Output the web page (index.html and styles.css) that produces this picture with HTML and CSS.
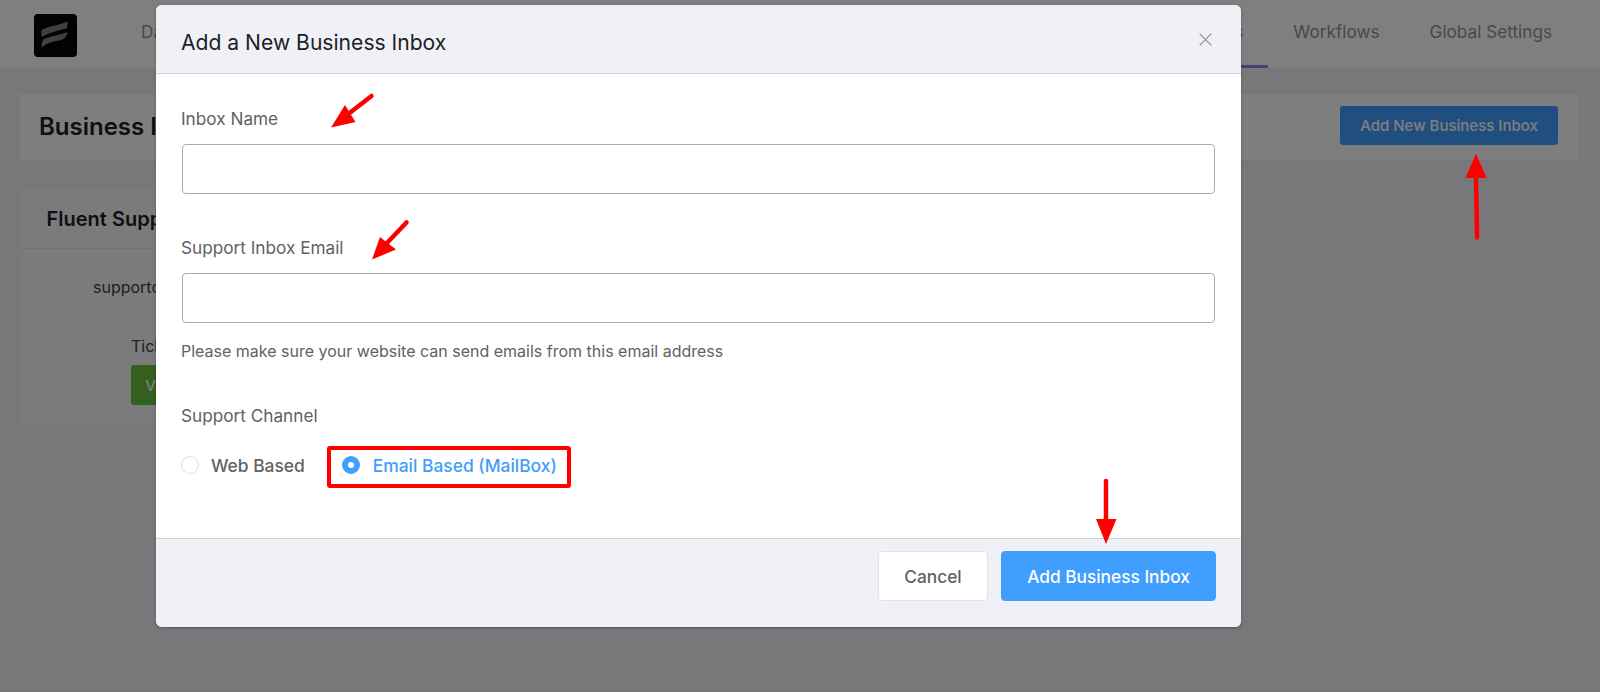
FILE: index.html
```html
<!DOCTYPE html>
<html lang="en">
<head>
<meta charset="utf-8">
<title>Add a New Business Inbox</title>
<link rel="stylesheet" href="styles.css">
</head>
<body>
<div class="app">
  <header class="nav">
    <svg class="logo" viewBox="0 0 44 44" aria-hidden="true">
      <rect width="44" height="44" rx="4" fill="#050505"/>
      <path d="M7.7 18C7.7 16.5 8.5 15.5 10 15C18 12.5 27 10.5 34.5 8C34.5 11 34 13 33 15C25 16.5 15 19.5 7.7 23.5Z" fill="#808080"/>
      <path d="M9.5 26C17 22.5 27 21.5 34.5 18.5C33.5 22.5 31.5 25.5 28 26.5C20 28 12 29.5 7.7 34.5C7.7 31 8 28 9.5 26Z" fill="#808080"/>
    </svg>
    <nav class="links">
      <a class="link">Dashboard</a>
      <a class="link">Tickets</a>
      <a class="link">Reports</a>
      <a class="link">Customers</a>
    </nav>
    <nav class="links links-end">
      <a class="link link-active">Business Inboxes</a>
      <a class="link">Workflows</a>
      <a class="link">Global Settings</a>
    </nav>
  </header>
  <main class="content">
    <section class="page-head">
      <h1 class="page-title">Business Inboxes</h1>
      <button class="btn-primary" type="button">Add New Business Inbox</button>
    </section>
    <section class="card">
      <h2 class="card-title">Fluent Support</h2>
      <div class="card-body">
        <p class="card-mail">supportdesk@example.com</p>
        <p class="card-label">Tickets</p>
        <button class="btn-success" type="button">View Tickets</button>
      </div>
    </section>
  </main>
</div>

<div class="backdrop"></div>

<div class="modal">
  <div class="modal-head">
    <h3 class="modal-title">Add a New Business Inbox</h3>
    <svg class="close" viewBox="0 0 13 13" aria-hidden="true"><path d="M0.7 0.7L12.3 12.3M12.3 0.7L0.7 12.3"/></svg>
  </div>
  <form class="modal-body">
    <div class="field field-name">
      <label class="label">Inbox Name</label>
      <input class="input" type="text">
    </div>
    <div class="field field-email">
      <label class="label">Support Inbox Email</label>
      <input class="input" type="text">
      <p class="help">Please make sure your website can send emails from this email address</p>
    </div>
    <div class="field-channel">
      <p class="label">Support Channel</p>
      <div class="radios">
        <span class="radio"><i class="dot"></i>Web Based</span>
        <span class="radio radio-on"><i class="dot"></i>Email Based (MailBox)</span>
      </div>
    </div>
  </form>
  <div class="modal-foot">
    <button class="btn-cancel" type="button">Cancel</button>
    <button class="btn-submit" type="button">Add Business Inbox</button>
  </div>
</div>

<svg class="annotations" viewBox="0 0 1600 692" aria-hidden="true">
  <rect class="mark-box" x="329" y="448" width="240" height="38" rx="1"/>
  <path class="mark-line" d="M371.5 96L347 115"/>
  <path class="mark-head" d="M331 127.5L345 105L355.5 122Z"/>
  <path class="mark-line" d="M406.5 222.5L386 244"/>
  <path class="mark-head" d="M372 259.5L380 237L396 249.5Z"/>
  <path class="mark-line" d="M1477 237.5L1476 176"/>
  <path class="mark-head" d="M1476 153.5L1465.5 178L1486.5 178Z"/>
  <path class="mark-line" d="M1106 481L1106 520"/>
  <path class="mark-head" d="M1106 544L1096 519L1116.5 519Z"/>
</svg>
</body>
</html>
```
FILE: styles.css
```css
* { box-sizing: border-box; }
html, body { margin: 0; height: 692px; overflow: hidden; }
body { font-family: Inter, "Liberation Sans", sans-serif; background: #f0f1f4; color: #2b2f36; }

.app { display: flex; flex-direction: column; height: 692px; }

.nav { display: flex; align-items: stretch; height: 68px; flex: none; background: #fff; padding: 0 23px 0 34px; }
.logo { width: 43px; height: 43px; margin-top: 13.5px; flex: none; }
.links { display: flex; margin-left: 39px; }
.links-end { margin-left: auto; }
.link { display: block; padding: 21px 25px 0; font-size: 17.2px; line-height: 22px; color: #909399; white-space: nowrap; }
.link-active { border-bottom: 3px solid #8f7ee0; }

.content { padding: 26px 21px 0 20px; }
.page-head { display: flex; align-items: flex-start; justify-content: space-between; height: 67px; padding: 12px 21px 0 19px; background: #fdfdfe; border-bottom: 1px solid #e6e8ec; }
.page-title { margin: 6px 0 0; font-size: 24px; line-height: 30px; font-weight: 600; color: #1d2024; }
.btn-primary { height: 39px; width: 218px; border: 0; border-radius: 3px; background: #409eff; color: #fff; font: 500 15px Inter, sans-serif; }

.card { width: 360px; height: 237px; margin: 27px 0 0 1px; background: #f6f7f8; border: 1px solid #eceef0; }
.card-title { margin: 0; height: 60px; padding: 17px 24.5px 0; font-size: 20px; line-height: 26px; font-weight: 600; color: #1d2024; border-bottom: 1px solid #e3e5e8; }
.card-body { padding: 28px 0 0 71px; }
.card-mail { margin: 0; font-size: 16px; line-height: 20px; color: #3c3f45; }
.card-label { margin: 39px 0 0 38px; font-size: 16px; line-height: 20px; color: #3c3f45; }
.btn-success { display: block; margin: 9px 0 0 38px; width: 120px; height: 40px; border: 0; border-radius: 3px; background: #67c23a; color: #fff; font: 500 15px Inter, sans-serif; }

.backdrop { position: absolute; inset: 0; background: rgba(0, 0, 0, .5); }

.modal { position: absolute; left: 155.5px; top: 5px; width: 1085.5px; height: 622px; display: flex; flex-direction: column; background: #fff; border-radius: 6px; overflow: hidden; box-shadow: 0 1px 3px rgba(0, 0, 0, .3); }
.modal-head { position: relative; display: flex; align-items: center; flex: none; height: 69px; padding: 8px 44px 0 25.5px; background: #f0f1f6; border-bottom: 1px solid #cfd0d2; }
.modal-title { margin: 0; flex: 1; font-size: 21.1px; line-height: 30px; font-weight: 400; color: #1c1f24; }
.close { width: 13px; height: 13px; margin-right: -15px; margin-top: -8px; }
.close path { stroke: #8d9096; stroke-width: 1.2; fill: none; }

.modal-body { flex: 1; padding: 0 25px 0 25.5px; }
.field-name { padding-top: 32.5px; }
.field-email { padding-top: 42.5px; }
.field-channel { padding-top: 41px; }
.label { display: block; margin: 0; font-size: 17.2px; line-height: 24px; color: #606266; }
.input { display: block; width: 1033px; height: 50px; margin: 13px 0 0 1px; background: #fff; border: 1.5px solid #a9abaf; border-radius: 4px; }
.help { margin: 16px 0 0; font-size: 16px; line-height: 24px; color: #606266; }
.radios { display: flex; gap: 37px; margin-top: 25px; }
.radio { display: flex; align-items: center; height: 24px; font-size: 17.4px; font-weight: 500; color: #606266; white-space: nowrap; }
.dot { flex: none; width: 18px; height: 18px; margin-right: 12px; background: #fff; border: 1px solid #dcdfe6; border-radius: 50%; }
.radio-on { color: #409eff; }
.radio-on .dot { margin-right: 13px; border: 6px solid #409eff; }

.modal-foot { display: flex; justify-content: flex-end; gap: 13px; flex: none; height: 89px; padding: 12px 25px 0 0; background: #f0f1f6; border-top: 1px solid #cfd0d2; }
.btn-cancel, .btn-submit { height: 50px; border-radius: 4px; font: 500 17.3px Inter, sans-serif; }
.btn-cancel { width: 110px; background: #fff; border: 1px solid #dfe1e6; color: #606266; }
.btn-submit { width: 215px; background: #409eff; border: 1px solid #409eff; color: #fff; }

.annotations { position: absolute; left: 0; top: 0; width: 1600px; height: 692px; pointer-events: none; }
.mark-box { fill: none; stroke: #ff0000; stroke-width: 4; }
.mark-line { fill: none; stroke: #ff0000; stroke-width: 4.5; stroke-linecap: round; }
.mark-head { fill: #ff0000; }
```
